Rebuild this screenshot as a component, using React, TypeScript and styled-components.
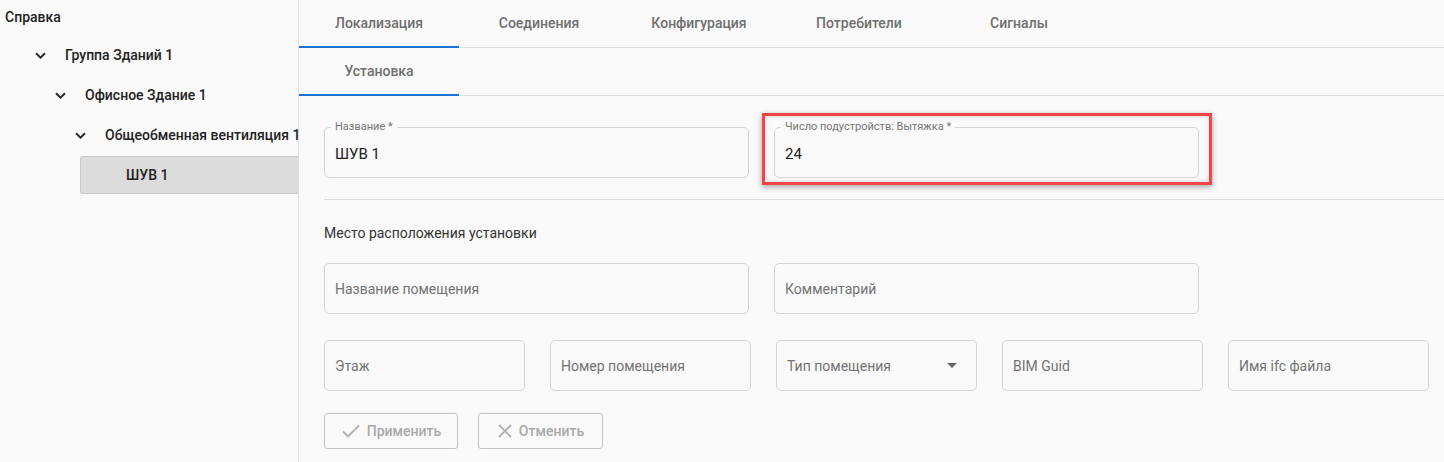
import React from "react";
import styled, { createGlobalStyle } from "styled-components";

const Global = createGlobalStyle`
  html, body { margin: 0; padding: 0; background: #fafafa; }
  body { font-family: Roboto, "Noto Sans", "Liberation Sans", sans-serif; color: #222; }
  * { box-sizing: border-box; }
`;

const Page = styled.div`
  display: flex;
  width: 1444px;
  height: 462px;
  background: #fafafa;
  overflow: hidden;
`;

const Sidebar = styled.aside`
  width: 299px;
  flex: none;
  border-right: 1px solid #dedede;
  display: flex;
  flex-direction: column;
`;

const Help = styled.div`
  height: 35px;
  padding: 9px 0 0 5px;
  font-size: 14px;
  font-weight: 500;
  color: #222;
`;

const TreeRow = styled.div<{ $depth: number }>`
  height: 40px;
  display: flex;
  align-items: center;
  padding-left: ${(p) => 35 + p.$depth * 20}px;
  font-size: 14px;
  font-weight: 500;
  color: #222;
  white-space: nowrap;
`;

const Chevron = styled.span`
  width: 11px;
  margin-right: 19px;
  display: flex;
  align-items: center;
`;

const Selected = styled.div`
  margin: 1px 0 0 80px;
  height: 38px;
  background: #dcdcdc;
  border: 1px solid #c9c9c9;
  border-right: none;
  border-radius: 3px 0 0 3px;
  display: flex;
  align-items: center;
  padding-left: 45px;
  font-size: 14px;
  font-weight: 500;
  color: #222;
`;

const Main = styled.main`
  flex: 1;
  display: flex;
  flex-direction: column;
`;

const TabRow = styled.div`
  display: flex;
  height: 48px;
  border-bottom: 1px solid #dcdcdc;
`;

const Tab = styled.div<{ $active?: boolean }>`
  width: 160px;
  display: flex;
  align-items: center;
  justify-content: center;
  font-size: 14px;
  font-weight: 500;
  color: #6f6f6f;
  border-bottom: 2px solid ${(p) => (p.$active ? "#1976d2" : "transparent")};
  margin-bottom: -1px;
`;

const Form = styled.div`
  padding: 31px 0 0 25px;
  display: flex;
  flex-direction: column;
`;

const Row = styled.div<{ $top?: number }>`
  display: flex;
  gap: 25px;
  margin-top: ${(p) => p.$top ?? 0}px;
`;

const Highlight = styled.div`
  margin: -14px -13px -7px -12px;
  padding: 11px 10px 4px 9px;
  border: 3px solid #f0464a;
  box-shadow: 0 2px 6px rgba(0, 0, 0, 0.35), inset 0 0 4px rgba(0, 0, 0, 0.18);
`;

const Outlined = styled.fieldset<{ $w: number }>`
  margin: -6px 0 0 0;
  width: ${(p) => p.$w}px;
  height: 57px;
  border: 1px solid #d6d6d6;
  border-radius: 5px;
  padding: 0 10px;
  display: flex;
  align-items: center;
`;

const Legend = styled.legend`
  font-size: 11px;
  color: #757575;
  padding: 0 4px;
  margin-left: -4px;
  line-height: 12px;
`;

const Value = styled.div`
  font-size: 15px;
  color: #222;
  margin-top: -3px;
`;

const Divider = styled.div`
  height: 1px;
  background: #dcdcdc;
  margin-top: 21px;
`;

const Section = styled.div`
  font-size: 14px;
  color: #333;
  margin: 25px 0 22px 0;
`;

const Field = styled.div<{ $w: number }>`
  width: ${(p) => p.$w}px;
  height: 51px;
  border: 1px solid #d6d6d6;
  border-radius: 5px;
  padding: 0 10px;
  display: flex;
  align-items: center;
  justify-content: space-between;
  font-size: 14px;
  color: #737373;
`;

const Caret = styled.span`
  width: 0;
  height: 0;
  border-left: 5px solid transparent;
  border-right: 5px solid transparent;
  border-top: 5px solid #666;
  margin-right: 9px;
`;

const Buttons = styled.div`
  display: flex;
  gap: 20px;
  margin-top: 22px;
`;

const Button = styled.button<{ $w: number }>`
  width: ${(p) => p.$w}px;
  height: 36px;
  border: 1px solid #c4c4c4;
  border-radius: 3px;
  background: transparent;
  display: flex;
  align-items: center;
  justify-content: center;
  gap: 6px;
  font-family: inherit;
  font-size: 14px;
  font-weight: 500;
  color: #a9a9a9;
  padding: 0;
`;

const ChevronIcon = () => (
  <svg width="11" height="7" viewBox="0 0 11 7">
    <path d="M1 1.2 L5.5 5.6 L10 1.2" fill="none" stroke="#2a2a2a" strokeWidth="2" />
  </svg>
);

const tree = [
  { d: 0, t: "Группа Зданий 1" },
  { d: 1, t: "Офисное Здание 1" },
  { d: 2, t: "Общеобменная вентиляция 1" },
];

export default function App() {
  return (
    <>
      <Global />
      <Page>
        <Sidebar>
          <Help>Справка</Help>
          {tree.map((n) => (
            <TreeRow key={n.t} $depth={n.d}>
              <Chevron>
                <ChevronIcon />
              </Chevron>
              {n.t}
            </TreeRow>
          ))}
          <Selected>ШУВ 1</Selected>
        </Sidebar>
        <Main>
          <TabRow>
            <Tab $active>Локализация</Tab>
            <Tab>Соединения</Tab>
            <Tab>Конфигурация</Tab>
            <Tab>Потребители</Tab>
            <Tab>Сигналы</Tab>
          </TabRow>
          <TabRow>
            <Tab $active>Установка</Tab>
          </TabRow>
          <Form>
            <Row>
              <Outlined $w={425}>
                <Legend>Название *</Legend>
                <Value>ШУВ 1</Value>
              </Outlined>
              <Highlight>
                <Outlined $w={425}>
                  <Legend>Число подустройств: Вытяжка *</Legend>
                  <Value>24</Value>
                </Outlined>
              </Highlight>
            </Row>
            <Divider />
            <Section>Место расположения установки</Section>
            <Row>
              <Field $w={425}>Название помещения</Field>
              <Field $w={425}>Комментарий</Field>
            </Row>
            <Row $top={26}>
              <Field $w={201}>Этаж</Field>
              <Field $w={201}>Номер помещения</Field>
              <Field $w={201}>
                Тип помещения
                <Caret />
              </Field>
              <Field $w={201}>BIM Guid</Field>
              <Field $w={201}>Имя ifc файла</Field>
            </Row>
            <Buttons>
              <Button $w={134}>
                <svg width="20" height="16" viewBox="0 0 20 16">
                  <path d="M2 8.5 L7 13.5 L18 2.5" fill="none" stroke="#b0b0b0" strokeWidth="1.8" />
                </svg>
                Применить
              </Button>
              <Button $w={125}>
                <svg width="16" height="16" viewBox="0 0 16 16">
                  <path d="M2 2 L14 14 M14 2 L2 14" fill="none" stroke="#b0b0b0" strokeWidth="1.8" />
                </svg>
                Отменить
              </Button>
            </Buttons>
          </Form>
        </Main>
      </Page>
    </>
  );
}
